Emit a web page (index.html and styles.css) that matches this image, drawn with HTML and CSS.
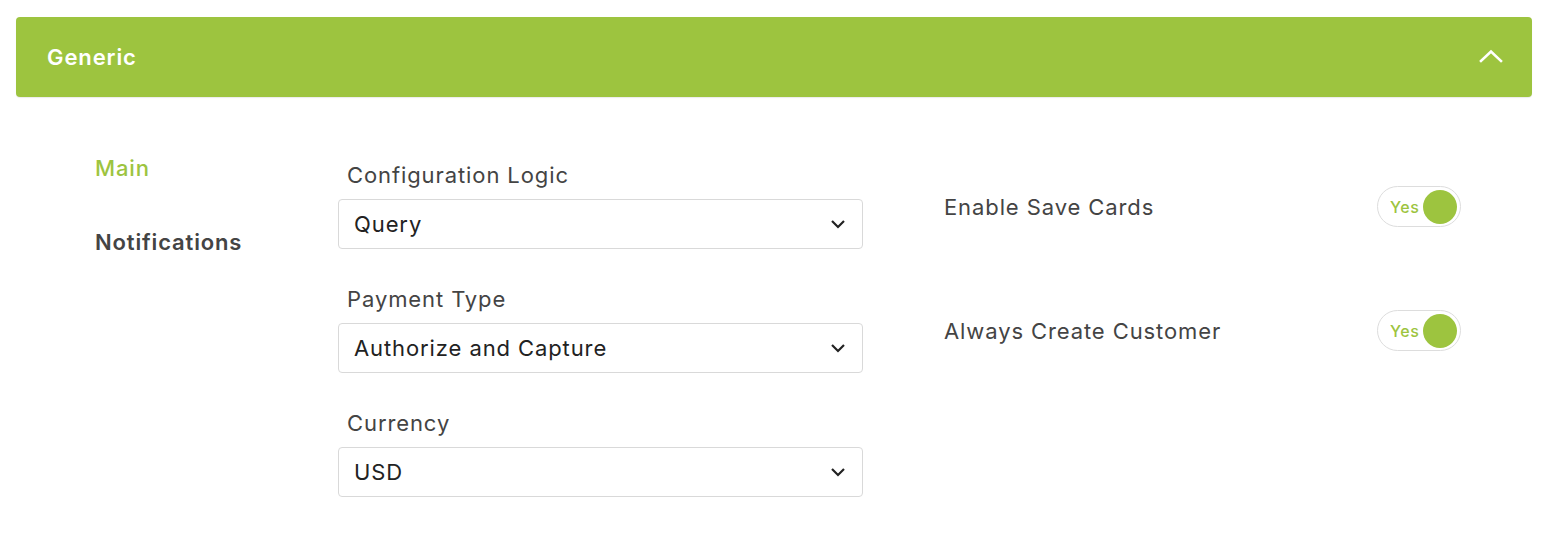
FILE: index.html
```html
<!DOCTYPE html>
<html>
<head>
<meta charset="utf-8">
<link rel="stylesheet" href="styles.css">
</head>
<body>
<div class="page">
  <div class="panel-header">
    <span class="panel-title">Generic</span>
    <svg class="collapse" width="24" height="14" viewBox="0 0 24 14"><path d="M2 12 L12 2.5 L22 12" fill="none" stroke="#fff" stroke-width="2.6" stroke-linecap="square"/></svg>
  </div>
  <div class="panel-body">
    <nav class="sidebar">
      <div class="nav-item active">Main</div>
      <div class="nav-item">Notifications</div>
    </nav>
    <div class="form-col">
      <div class="group">
        <div class="label">Configuration Logic</div>
        <div class="select"><span>Query</span><svg width="16" height="10" viewBox="0 0 16 10"><path d="M2 2 L8 8 L14 2" fill="none" stroke="#222" stroke-width="2.2"/></svg></div>
      </div>
      <div class="group">
        <div class="label">Payment Type</div>
        <div class="select"><span>Authorize and Capture</span><svg width="16" height="10" viewBox="0 0 16 10"><path d="M2 2 L8 8 L14 2" fill="none" stroke="#222" stroke-width="2.2"/></svg></div>
      </div>
      <div class="group">
        <div class="label">Currency</div>
        <div class="select"><span>USD</span><svg width="16" height="10" viewBox="0 0 16 10"><path d="M2 2 L8 8 L14 2" fill="none" stroke="#222" stroke-width="2.2"/></svg></div>
      </div>
    </div>
    <div class="right-col">
      <div class="row">
        <span class="row-label">Enable Save Cards</span>
        <div class="toggle"><span class="yes">Yes</span><span class="knob"></span></div>
      </div>
      <div class="row">
        <span class="row-label">Always Create Customer</span>
        <div class="toggle"><span class="yes">Yes</span><span class="knob"></span></div>
      </div>
    </div>
  </div>
</div>
</body>
</html>
```
FILE: styles.css
```css
html, body { margin: 0; padding: 0; background: #fff; }
body { font-family: Inter, "Noto Sans", "Liberation Sans", sans-serif; color: #444; letter-spacing: 0.9px; }
.page { padding: 17px 24px 0 16px; }
.panel-header {
  height: 80px;
  background: #9dc43f;
  border-radius: 4px;
  display: flex;
  align-items: center;
  justify-content: space-between;
  padding: 0 29px 0 31px;
  box-shadow: 0 1px 1px rgba(0,0,0,0.08);
}
.panel-title { color: #fff; font-size: 22px; font-weight: 600; }
.collapse { display: block; margin-top: -2px; }
.panel-body {
  display: grid;
  grid-template-columns: 243px 525px 598px;
  padding-left: 79px;
  align-items: start;
}
.sidebar { padding-top: 56px; display: flex; flex-direction: column; gap: 44px; }
.nav-item { font-size: 22px; line-height: 30px; font-weight: 600; color: #444; letter-spacing: 0.85px; }
.nav-item.active { color: #9dc43f; font-weight: 500; }
.form-col { padding-top: 63px; display: flex; flex-direction: column; gap: 35px; }
.label { font-size: 22px; line-height: 30px; padding-left: 9px; color: #444; margin-bottom: 9px; }
.select {
  height: 50px; box-sizing: border-box;
  border: 1px solid #d9d9d9; border-radius: 4px;
  display: flex; align-items: center; justify-content: space-between;
  padding: 0 16px 0 15px;
  font-size: 22px; color: #222;
}
.select svg { display: block; }
.right-col { padding-top: 89px; padding-left: 81px; display: flex; flex-direction: column; gap: 83px; }
.row { display: flex; align-items: center; justify-content: space-between; height: 41px; }
.row-label { font-size: 22px; color: #444; }
.toggle {
  width: 84px; height: 41px; box-sizing: border-box;
  border: 1px solid #ddd; border-radius: 21px;
  display: flex; align-items: center; justify-content: space-between;
  padding: 0 3px 0 12px;
}
.yes { color: #9dc43f; font-size: 16px; font-weight: 500; letter-spacing: 0.6px; }
.knob { width: 34px; height: 34px; border-radius: 50%; background: #9dc43f; display: block; }
```
